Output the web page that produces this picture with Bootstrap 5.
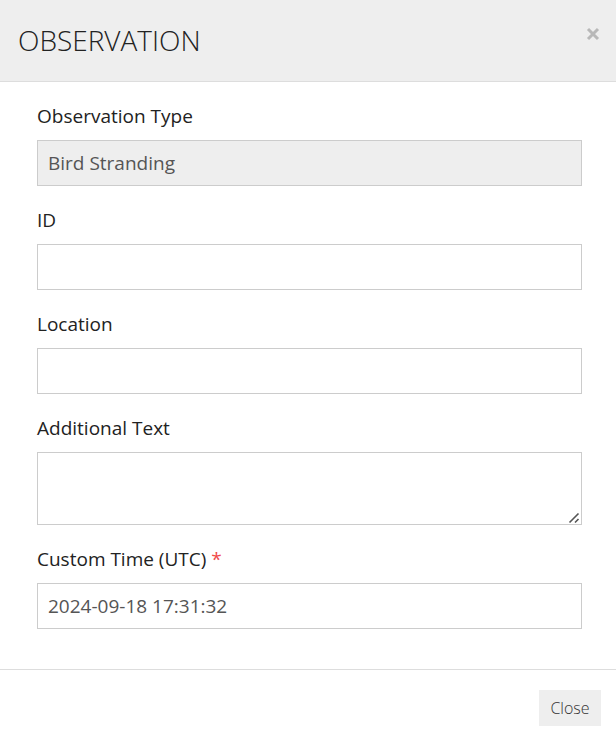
<!DOCTYPE html>
<html lang="en">
<head>
<meta charset="utf-8">
<meta name="viewport" content="width=device-width, initial-scale=1">
<title>Observation</title>
<link href="https://cdn.jsdelivr.net/npm/bootstrap@5.3.0/dist/css/bootstrap.min.css" rel="stylesheet">
<style>
body{font-family:"Open Sans",sans-serif;font-size:19px;line-height:26px;color:#222;background:#fff}
.obs-head{background:#eee;border-bottom:1px solid #ddd;padding:20px 16px 20px 18px}
.obs-title{font-size:28px;font-weight:300;line-height:41px;color:#222}
.obs-close{color:#b8b8b8;line-height:0;margin-top:7px}
.obs-body{padding:21px 34px 40px 37px}
.obs-field{margin-bottom:21px}
.obs-field:last-child{margin-bottom:0}
.obs-field .form-label{margin-bottom:11px;display:block}
.obs-field .form-control{border-color:#ccc;border-radius:0;font-size:19px;line-height:26px;padding:9px 10px;color:#555;height:46px}
.obs-field textarea.form-control{height:73px;display:block}
.obs-field textarea::-webkit-resizer{background:url("data:image/svg+xml,%3Csvg xmlns='http://www.w3.org/2000/svg' width='15' height='15' viewBox='0 0 15 15'%3E%3Cpath d='M3.5 13.5 12.5 4.5M9 13.5 12.5 10' stroke='%23555' stroke-width='1.6' fill='none'/%3E%3C/svg%3E") no-repeat right bottom}
.obs-field .form-control:disabled{background:#eee;opacity:1}
.obs-star{color:#f04a4a}
.obs-foot{border-top:1px solid #ddd;padding:20px 15px}
.obs-btn{background:#eee;color:#333;font-weight:300;font-size:16px;line-height:24px;padding:6px 11px;min-width:62px;border:0;border-radius:0}
</style>
</head>
<body>
<main>
<header class="obs-head d-flex justify-content-between align-items-start">
<h1 class="obs-title m-0">OBSERVATION</h1>
<button type="button" class="obs-close btn p-0 border-0" aria-label="Dismiss"><svg width="14" height="14" viewBox="0 0 14 14" fill="none" stroke="currentColor" stroke-width="3"><path d="M2 2 12 12M12 2 2 12"/></svg></button>
</header>
<form class="obs-body">
<div class="obs-field"><label class="form-label" for="type">Observation Type</label><input class="form-control" id="type" value="Bird Stranding" disabled></div>
<div class="obs-field"><label class="form-label" for="ident">ID</label><input class="form-control" id="ident"></div>
<div class="obs-field"><label class="form-label" for="loc">Location</label><input class="form-control" id="loc"></div>
<div class="obs-field"><label class="form-label" for="extra">Additional Text</label><textarea class="form-control" id="extra"></textarea></div>
<div class="obs-field"><label class="form-label" for="time">Custom Time (UTC) <span class="obs-star">*</span></label><input class="form-control" id="time" value="2024-09-18 17:31:32"></div>
</form>
<footer class="obs-foot d-flex justify-content-end"><button type="button" class="obs-btn btn">Close</button></footer>
</main>
<script src="https://cdn.jsdelivr.net/npm/bootstrap@5.3.0/dist/js/bootstrap.bundle.min.js"></script>
</body>
</html>
